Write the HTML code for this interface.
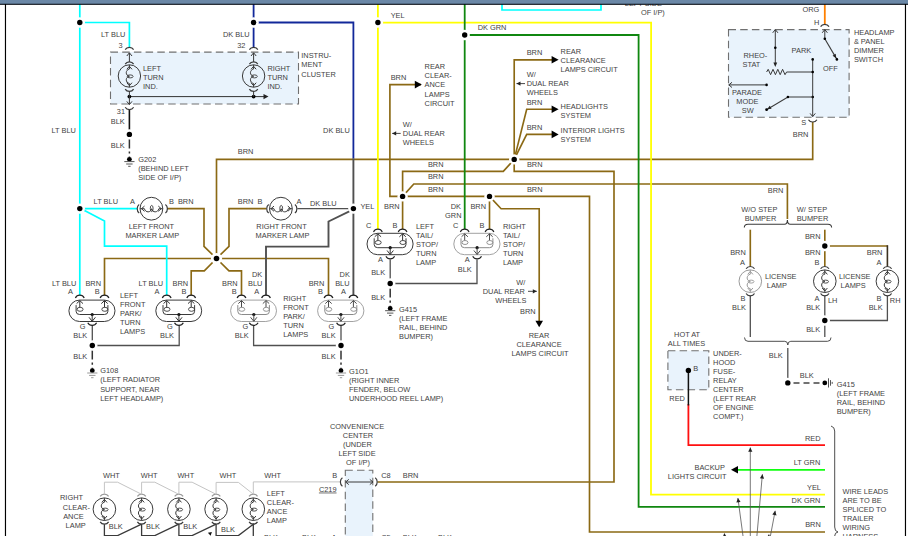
<!DOCTYPE html>
<html><head><meta charset="utf-8"><title>Exterior Lamps Wiring Diagram</title>
<style>
html,body{margin:0;padding:0;background:#fff;overflow:hidden}
svg{display:block}
text{font-family:"Liberation Sans",Arial,sans-serif;}
</style></head><body>
<svg width="908" height="536" viewBox="0 0 908 536">
<rect width="908" height="536" fill="#fff"/>
<rect x="110.5" y="52.1" width="188.0" height="51.9" fill="#e9f3fc" stroke="#707070" stroke-width="1.1" stroke-dasharray="7.5,4.2"/>
<rect x="728.5" y="29.6" width="120.6" height="87.6" fill="#e9f3fc" stroke="#707070" stroke-width="1.1" stroke-dasharray="7.5,4.2"/>
<rect x="667.9" y="350.7" width="40.9" height="39.0" fill="#e9f3fc" stroke="#707070" stroke-width="1.1" stroke-dasharray="7.5,4.2"/>
<rect x="345.3" y="470.2" width="27.5" height="74.8" fill="#e9f3fc" stroke="#707070" stroke-width="1.1" stroke-dasharray="7.5,4.2"/>
<path d="M216.5,258.5 L216.5,159.4 L812.7,159.4 L812.7,122.0" stroke="#8b6914" stroke-width="1.65" fill="none" />
<path d="M421.0,84.6 L389.9,84.6 L389.9,196.4 L589.5,196.4 L589.5,532.0 L825.0,532.0" stroke="#8b6914" stroke-width="1.65" fill="none" />
<path d="M556.0,59.8 L514.2,59.8 L514.2,159.4" stroke="#8b6914" stroke-width="1.65" fill="none" />
<path d="M514.2,159.4 L526.7,109.2 L556.0,109.2" stroke="#8b6914" stroke-width="1.65" fill="none" />
<path d="M514.2,159.4 L526.7,134.4 L556.0,134.4" stroke="#8b6914" stroke-width="1.65" fill="none" />
<path d="M402.6,196.4 L402.6,171.3 L503.3,171.3 L514.2,159.4" stroke="#8b6914" stroke-width="1.65" fill="none" />
<path d="M514.2,159.4 L514.2,171.3 L614.0,171.3 L614.0,482.0 L377.5,482.0" stroke="#8b6914" stroke-width="1.65" fill="none" />
<path d="M402.6,196.4 L413.8,184.0 L787.4,184.0 L787.4,219.0" stroke="#8b6914" stroke-width="1.65" fill="none" />
<path d="M402.6,196.4 L402.6,229.0" stroke="#8b6914" stroke-width="1.65" fill="none" />
<path d="M489.5,196.4 L489.5,229.0" stroke="#8b6914" stroke-width="1.65" fill="none" />
<path d="M489.5,196.4 L501.1,208.7 L539.2,208.7 L539.2,321.0" stroke="#8b6914" stroke-width="1.65" fill="none" />
<path d="M167.2,208.6 L204.0,208.6 L204.0,246.4 L216.5,258.5" stroke="#8b6914" stroke-width="1.65" fill="none" />
<path d="M266.0,208.6 L229.0,208.6 L229.0,246.4 L216.5,258.5" stroke="#8b6914" stroke-width="1.65" fill="none" />
<path d="M104.5,295.5 L104.5,258.5 L328.5,258.5 L328.5,295.5" stroke="#8b6914" stroke-width="1.65" fill="none" />
<path d="M216.5,258.5 L204.3,270.8 L191.2,270.8 L191.2,295.5" stroke="#8b6914" stroke-width="1.65" fill="none" />
<path d="M216.5,258.5 L229.0,270.8 L241.5,270.8 L241.5,295.5" stroke="#8b6914" stroke-width="1.65" fill="none" />
<path d="M750.3,229.7 L750.3,266.4" stroke="#8b6914" stroke-width="1.65" fill="none" />
<path d="M824.8,229.7 L824.8,266.4" stroke="#8b6914" stroke-width="1.65" fill="none" />
<path d="M824.8,246.0 L887.4,246.0" stroke="#8b6914" stroke-width="1.65" fill="none" />
<path d="M887.4,245.2 L887.4,266.4" stroke="#3a3020" stroke-width="1.6" fill="none" />
<path d="M253.6,4.0 L253.6,47.0" stroke="#12289a" stroke-width="1.8" fill="none" />
<path d="M253.6,22.5 L353.4,22.5 L353.4,158.5" stroke="#12289a" stroke-width="1.8" fill="none" />
<path d="M353.4,158.5 L353.4,295.5" stroke="#505050" stroke-width="1.9" fill="none" />
<path d="M353.4,209.3 L328.5,221.5 L328.5,246.6 L266.0,246.6 L266.0,295.5" stroke="#505050" stroke-width="1.9" fill="none" />
<path d="M79.8,4.0 L79.8,295.5" stroke="#00ffff" stroke-width="1.7" fill="none" />
<path d="M79.8,22.5 L129.4,22.5 L129.4,47.0" stroke="#00ffff" stroke-width="1.7" fill="none" />
<path d="M79.8,208.6 L137.4,208.6" stroke="#00ffff" stroke-width="1.7" fill="none" />
<path d="M79.8,208.6 L85.5,211.0 L104.5,221.0 L104.5,246.2 L166.7,246.2 L166.7,295.5" stroke="#00ffff" stroke-width="1.7" fill="none" />
<path d="M502.0,3.0 L502.0,10.0 L601.0,10.0 L601.0,3.0" stroke="#00ffff" stroke-width="1.7" fill="none" />
<path d="M377.9,4.0 L377.9,229.0" stroke="#ffff00" stroke-width="1.8" fill="none" />
<path d="M377.9,22.7 L651.1,22.7 L651.0,494.7 L825.0,494.7" stroke="#ffff00" stroke-width="1.8" fill="none" />
<path d="M464.7,4.0 L464.7,229.0" stroke="#108710" stroke-width="1.8" fill="none" />
<path d="M464.7,35.0 L638.6,35.0 L638.6,506.8 L825.0,506.8" stroke="#108710" stroke-width="1.8" fill="none" />
<path d="M824.8,4.0 L824.8,24.3" stroke="#ff8000" stroke-width="1.8" fill="none" />
<path d="M688.4,404.0 L688.4,445.1 L825.0,445.1" stroke="#ff1010" stroke-width="1.8" fill="none" />
<path d="M688.4,370.4 L688.4,405.5" stroke="#111" stroke-width="1.5" fill="none" />
<path d="M737.0,469.8 L825.0,469.8" stroke="#10ff10" stroke-width="1.8" fill="none" />
<path d="M129.4,96.6 L264.0,96.6" stroke="#333" stroke-width="1.0" fill="none" />
<polygon points="268.5,96.6 263.5,99.2 263.5,94.0" fill="#222"/>
<circle cx="129.4" cy="96.6" r="1.9" fill="#000"/>
<circle cx="253.6" cy="96.6" r="1.9" fill="#000"/>
<path d="M129.4,109.6 L129.4,134.4" stroke="#111" stroke-width="1.6" fill="none" />
<path d="M129.4,138.9 V157.3" stroke="#333" stroke-width="1.5" stroke-dasharray="9.5,3,2.2,3"/>
<path d="M92.3,325.2 L92.3,345.5" stroke="#505050" stroke-width="1.3" fill="none" />
<path d="M92.3,345.5 L179.2,345.5 L179.2,325.2" stroke="#505050" stroke-width="1.3" fill="none" />
<path d="M253.6,325.2 L253.6,345.5 L341.0,345.5" stroke="#505050" stroke-width="1.3" fill="none" />
<path d="M341.0,325.2 L341.0,345.5" stroke="#505050" stroke-width="1.3" fill="none" />
<path d="M92.3,350.0 V368.7" stroke="#333" stroke-width="1.5" stroke-dasharray="9.5,3,2.2,3"/>
<path d="M341.0,350.0 V368.7" stroke="#333" stroke-width="1.5" stroke-dasharray="9.5,3,2.2,3"/>
<path d="M390.2,259.5 L390.2,283.5" stroke="#505050" stroke-width="1.3" fill="none" />
<path d="M390.2,283.5 L477.0,283.5 L477.0,259.5" stroke="#505050" stroke-width="1.3" fill="none" />
<path d="M390.2,288.0 V306.4" stroke="#333" stroke-width="1.5" stroke-dasharray="9.5,3,2.2,3"/>
<path d="M750.3,295.8 L750.3,337.0" stroke="#505050" stroke-width="1.3" fill="none" />
<path d="M824.8,295.8 L824.8,337.0" stroke="#505050" stroke-width="1.3" fill="none" />
<path d="M887.4,295.8 L887.4,320.5 L824.8,320.5" stroke="#505050" stroke-width="1.3" fill="none" />
<path d="M787.8,348.0 L787.8,382.9" stroke="#505050" stroke-width="1.3" fill="none" />
<path d="M793.5,382.9 H821" stroke="#444" stroke-width="1.5" stroke-dasharray="6,4"/>
<path d="M744.3,227.5 Q744.3,224.2 748,224.2 H784.5 Q787.4,224.2 787.4,220 Q787.4,224.2 790.3,224.2 H828 Q831.6,224.2 831.6,227.5" fill="none" stroke="#3a3a3a" stroke-width="1.1"/>
<path d="M744.5,337.5 Q744.5,341.3 748,341.3 H784.8 Q787.8,341.3 787.8,345 Q787.8,341.3 790.8,341.3 H827.5 Q831,341.3 831,337.5" fill="none" stroke="#3a3a3a" stroke-width="0.9"/>
<path d="M831,426 Q834.7,427 834.7,431 V527 Q834.7,531.5 838,532 Q834.7,532.5 834.7,536" fill="none" stroke="#3a3a3a" stroke-width="0.9"/>
<path d="M125.2,49.6 Q126.5,47.3 129.4,47.3 Q132.3,47.3 133.6,49.6" stroke="#3a3a3a" stroke-width="1.2" fill="none"/>
<path d="M126.8,56.0 L129.4,52.8 L132.0,56.0" stroke="#3a3a3a" stroke-width="1" fill="none"/>
<path d="M129.4,53.0 L129.4,62.0" stroke="#3a3a3a" stroke-width="1" fill="none" />
<path d="M125.2,64.1 Q126.5,61.8 129.4,61.8 Q132.3,61.8 133.6,64.1" stroke="#3a3a3a" stroke-width="1.2" fill="none"/>
<circle cx="129.4" cy="76.0" r="11.2" fill="none" stroke="#3a3a3a" stroke-width="1"/>
<path d="M129.4,64.8 V69.0 C125.2,70.0 125.2,75.5 129.4,76.3 C125.2,77.0 125.2,82.5 129.4,83.5 V87.2" fill="none" stroke="#3a3a3a" stroke-width="1"/>
<ellipse cx="130.2" cy="76.4" rx="2.9" ry="1.5" fill="none" stroke="#3a3a3a" stroke-width="0.9"/>
<path d="M126.8,69.3 L129.4,66.3 L132.0,69.3" stroke="#3a3a3a" stroke-width="1" fill="none"/>
<path d="M126.8,82.7 L129.4,85.7 L132.0,82.7" stroke="#3a3a3a" stroke-width="1" fill="none"/>
<path d="M125.2,89.1 Q126.5,91.4 129.4,91.4 Q132.3,91.4 133.6,89.1" stroke="#3a3a3a" stroke-width="1.2" fill="none"/>
<path d="M129.4,91.4 L129.4,96.6" stroke="#3a3a3a" stroke-width="1" fill="none" />
<path d="M249.4,49.6 Q250.7,47.3 253.6,47.3 Q256.5,47.3 257.8,49.6" stroke="#3a3a3a" stroke-width="1.2" fill="none"/>
<path d="M251.0,56.0 L253.6,52.8 L256.2,56.0" stroke="#3a3a3a" stroke-width="1" fill="none"/>
<path d="M253.6,53.0 L253.6,62.0" stroke="#3a3a3a" stroke-width="1" fill="none" />
<path d="M249.4,64.1 Q250.7,61.8 253.6,61.8 Q256.5,61.8 257.8,64.1" stroke="#3a3a3a" stroke-width="1.2" fill="none"/>
<circle cx="253.6" cy="76.0" r="11.2" fill="none" stroke="#3a3a3a" stroke-width="1"/>
<path d="M253.6,64.8 V69.0 C249.4,70.0 249.4,75.5 253.6,76.3 C249.4,77.0 249.4,82.5 253.6,83.5 V87.2" fill="none" stroke="#3a3a3a" stroke-width="1"/>
<ellipse cx="254.4" cy="76.4" rx="2.9" ry="1.5" fill="none" stroke="#3a3a3a" stroke-width="0.9"/>
<path d="M251.0,69.3 L253.6,66.3 L256.2,69.3" stroke="#3a3a3a" stroke-width="1" fill="none"/>
<path d="M251.0,82.7 L253.6,85.7 L256.2,82.7" stroke="#3a3a3a" stroke-width="1" fill="none"/>
<path d="M249.4,89.1 Q250.7,91.4 253.6,91.4 Q256.5,91.4 257.8,89.1" stroke="#3a3a3a" stroke-width="1.2" fill="none"/>
<path d="M253.6,91.4 L253.6,96.6" stroke="#3a3a3a" stroke-width="1" fill="none" />
<path d="M129.4,96.6 L129.4,104.4" stroke="#3a3a3a" stroke-width="1" fill="none" />
<path d="M126.8,101.4 L129.4,104.6 L132.0,101.4" stroke="#3a3a3a" stroke-width="1" fill="none"/>
<path d="M125.2,107.3 Q126.5,109.6 129.4,109.6 Q132.3,109.6 133.6,107.3" stroke="#3a3a3a" stroke-width="1.2" fill="none"/>
<circle cx="129.4" cy="159.3" r="2.4" fill="#000"/>
<path d="M124.3,161.6 H134.5" stroke="#555" stroke-width="1"/>
<path d="M126.2,164.0 H132.6" stroke="#555" stroke-width="1"/>
<path d="M128.2,166.3 H130.6" stroke="#555" stroke-width="1"/>
<circle cx="151.4" cy="208.7" r="11.4" fill="none" stroke="#3a3a3a" stroke-width="1"/>
<path d="M140.0,208.7 H144.4 C145.4,212.9 150.9,212.9 151.7,208.7 C152.4,212.9 157.9,212.9 158.9,208.7 H162.8" fill="none" stroke="#3a3a3a" stroke-width="1"/>
<ellipse cx="151.7" cy="208.5" rx="1.4" ry="3.1" fill="none" stroke="#3a3a3a" stroke-width="0.9"/>
<path d="M144.5,206.1 L141.5,208.7 L144.5,211.3" stroke="#3a3a3a" stroke-width="1" fill="none"/>
<path d="M158.3,206.1 L161.3,208.7 L158.3,211.3" stroke="#3a3a3a" stroke-width="1" fill="none"/>
<path d="M139.2,204.5 Q137.2,205.8 137.2,208.7 Q137.2,211.6 139.2,212.9" stroke="#3a3a3a" stroke-width="1.2" fill="none"/>
<path d="M165.4,204.5 Q167.4,205.8 167.4,208.7 Q167.4,211.6 165.4,212.9" stroke="#3a3a3a" stroke-width="1.2" fill="none"/>
<circle cx="280.9" cy="208.7" r="11.4" fill="none" stroke="#3a3a3a" stroke-width="1"/>
<path d="M269.5,208.7 H273.9 C274.9,212.9 280.4,212.9 281.2,208.7 C281.9,212.9 287.4,212.9 288.4,208.7 H292.3" fill="none" stroke="#3a3a3a" stroke-width="1"/>
<ellipse cx="281.2" cy="208.5" rx="1.4" ry="3.1" fill="none" stroke="#3a3a3a" stroke-width="0.9"/>
<path d="M274.0,206.1 L271.0,208.7 L274.0,211.3" stroke="#3a3a3a" stroke-width="1" fill="none"/>
<path d="M287.8,206.1 L290.8,208.7 L287.8,211.3" stroke="#3a3a3a" stroke-width="1" fill="none"/>
<path d="M268.7,204.5 Q266.7,205.8 266.7,208.7 Q266.7,211.6 268.7,212.9" stroke="#3a3a3a" stroke-width="1.2" fill="none"/>
<path d="M294.9,204.5 Q296.9,205.8 296.9,208.7 Q296.9,211.6 294.9,212.9" stroke="#3a3a3a" stroke-width="1.2" fill="none"/>
<path d="M297.3,208.6 L353.4,208.6" stroke="#505050" stroke-width="1.3" fill="none" />
<rect x="68.9" y="300.1" width="46.1" height="21.4" rx="10.7" fill="none" stroke="#3a3a3a" stroke-width="1"/>
<path d="M75.4,298.0 Q76.7,295.2 79.8,295.2 Q82.9,295.2 84.2,298.0" stroke="#222" stroke-width="1.25" fill="none"/>
<path d="M76.6,303.6 L79.8,300.6 L83.0,303.6" stroke="#333" stroke-width="1" fill="none"/>
<path d="M79.8,300.6 V307.3" stroke="#333" stroke-width="1"/>
<ellipse cx="80.1" cy="309.3" rx="3" ry="2" fill="none" stroke="#3a3a3a" stroke-width="0.9"/>
<path d="M100.1,298.0 Q101.4,295.2 104.5,295.2 Q107.6,295.2 108.9,298.0" stroke="#222" stroke-width="1.25" fill="none"/>
<path d="M101.3,303.6 L104.5,300.6 L107.7,303.6" stroke="#333" stroke-width="1" fill="none"/>
<path d="M104.5,300.6 V307.3" stroke="#333" stroke-width="1"/>
<ellipse cx="104.8" cy="309.3" rx="3" ry="2" fill="none" stroke="#3a3a3a" stroke-width="0.9"/>
<path d="M76.1,305.1 V311.3 Q76.1,314.5 79.6,314.5 H104.5 Q107.9,314.5 107.9,311.3 V305.1" fill="none" stroke="#3a3a3a" stroke-width="1"/>
<circle cx="92.2" cy="314.5" r="1.6" fill="#111"/>
<path d="M92.2,314.5 V321.2" stroke="#333" stroke-width="1"/>
<path d="M89.0,317.3 L92.2,321.3 L95.4,317.3" stroke="#333" stroke-width="1" fill="none"/>
<path d="M87.8,322.8 Q89.1,325.4 92.2,325.4 Q95.2,325.4 96.6,322.8" stroke="#222" stroke-width="1.25" fill="none"/>
<rect x="155.8" y="300.1" width="45.9" height="21.4" rx="10.7" fill="none" stroke="#3a3a3a" stroke-width="1"/>
<path d="M162.3,298.0 Q163.6,295.2 166.7,295.2 Q169.8,295.2 171.1,298.0" stroke="#222" stroke-width="1.25" fill="none"/>
<path d="M163.5,303.6 L166.7,300.6 L169.9,303.6" stroke="#333" stroke-width="1" fill="none"/>
<path d="M166.7,300.6 V307.3" stroke="#333" stroke-width="1"/>
<ellipse cx="167.0" cy="309.3" rx="3" ry="2" fill="none" stroke="#3a3a3a" stroke-width="0.9"/>
<path d="M186.8,298.0 Q188.1,295.2 191.2,295.2 Q194.3,295.2 195.6,298.0" stroke="#222" stroke-width="1.25" fill="none"/>
<path d="M188.0,303.6 L191.2,300.6 L194.4,303.6" stroke="#333" stroke-width="1" fill="none"/>
<path d="M191.2,300.6 V307.3" stroke="#333" stroke-width="1"/>
<ellipse cx="191.5" cy="309.3" rx="3" ry="2" fill="none" stroke="#3a3a3a" stroke-width="0.9"/>
<path d="M163.0,305.1 V311.3 Q163.0,314.5 166.5,314.5 H191.2 Q194.6,314.5 194.6,311.3 V305.1" fill="none" stroke="#3a3a3a" stroke-width="1"/>
<circle cx="178.9" cy="314.5" r="1.6" fill="#111"/>
<path d="M178.9,314.5 V321.2" stroke="#333" stroke-width="1"/>
<path d="M175.8,317.3 L178.9,321.3 L182.1,317.3" stroke="#333" stroke-width="1" fill="none"/>
<path d="M174.5,322.8 Q175.9,325.4 178.9,325.4 Q182.0,325.4 183.3,322.8" stroke="#222" stroke-width="1.25" fill="none"/>
<rect x="230.6" y="300.1" width="45.9" height="21.4" rx="10.7" fill="none" stroke="#a2a2a2" stroke-width="1"/>
<path d="M237.1,298.0 Q238.4,295.2 241.5,295.2 Q244.6,295.2 245.9,298.0" stroke="#222" stroke-width="1.25" fill="none"/>
<path d="M238.3,303.6 L241.5,300.6 L244.7,303.6" stroke="#4a4a4a" stroke-width="1" fill="none"/>
<path d="M241.5,300.6 V307.3" stroke="#4a4a4a" stroke-width="1"/>
<ellipse cx="241.8" cy="309.3" rx="3" ry="2" fill="none" stroke="#8a8a8a" stroke-width="0.9"/>
<path d="M261.6,298.0 Q262.9,295.2 266.0,295.2 Q269.1,295.2 270.4,298.0" stroke="#222" stroke-width="1.25" fill="none"/>
<path d="M262.8,303.6 L266.0,300.6 L269.2,303.6" stroke="#4a4a4a" stroke-width="1" fill="none"/>
<path d="M266.0,300.6 V307.3" stroke="#4a4a4a" stroke-width="1"/>
<ellipse cx="266.3" cy="309.3" rx="3" ry="2" fill="none" stroke="#8a8a8a" stroke-width="0.9"/>
<path d="M237.8,305.1 V311.3 Q237.8,314.5 241.3,314.5 H266.0 Q269.4,314.5 269.4,311.3 V305.1" fill="none" stroke="#8a8a8a" stroke-width="1"/>
<circle cx="253.8" cy="314.5" r="1.6" fill="#111"/>
<path d="M253.8,314.5 V321.2" stroke="#4a4a4a" stroke-width="1"/>
<path d="M250.6,317.3 L253.8,321.3 L256.9,317.3" stroke="#4a4a4a" stroke-width="1" fill="none"/>
<path d="M249.3,322.8 Q250.7,325.4 253.8,325.4 Q256.8,325.4 258.1,322.8" stroke="#222" stroke-width="1.25" fill="none"/>
<rect x="317.6" y="300.1" width="46.3" height="21.4" rx="10.7" fill="none" stroke="#a2a2a2" stroke-width="1"/>
<path d="M324.1,298.0 Q325.4,295.2 328.5,295.2 Q331.6,295.2 332.9,298.0" stroke="#222" stroke-width="1.25" fill="none"/>
<path d="M325.3,303.6 L328.5,300.6 L331.7,303.6" stroke="#4a4a4a" stroke-width="1" fill="none"/>
<path d="M328.5,300.6 V307.3" stroke="#4a4a4a" stroke-width="1"/>
<ellipse cx="328.8" cy="309.3" rx="3" ry="2" fill="none" stroke="#8a8a8a" stroke-width="0.9"/>
<path d="M349.0,298.0 Q350.3,295.2 353.4,295.2 Q356.5,295.2 357.8,298.0" stroke="#222" stroke-width="1.25" fill="none"/>
<path d="M350.2,303.6 L353.4,300.6 L356.6,303.6" stroke="#4a4a4a" stroke-width="1" fill="none"/>
<path d="M353.4,300.6 V307.3" stroke="#4a4a4a" stroke-width="1"/>
<ellipse cx="353.7" cy="309.3" rx="3" ry="2" fill="none" stroke="#8a8a8a" stroke-width="0.9"/>
<path d="M324.8,305.1 V311.3 Q324.8,314.5 328.3,314.5 H353.4 Q356.8,314.5 356.8,311.3 V305.1" fill="none" stroke="#8a8a8a" stroke-width="1"/>
<circle cx="340.9" cy="314.5" r="1.6" fill="#111"/>
<path d="M340.9,314.5 V321.2" stroke="#4a4a4a" stroke-width="1"/>
<path d="M337.8,317.3 L340.9,321.3 L344.1,317.3" stroke="#4a4a4a" stroke-width="1" fill="none"/>
<path d="M336.6,322.8 Q337.9,325.4 340.9,325.4 Q344.0,325.4 345.3,322.8" stroke="#222" stroke-width="1.25" fill="none"/>
<circle cx="92.3" cy="370.7" r="2.4" fill="#000"/>
<path d="M87.2,373.0 H97.4" stroke="#999" stroke-width="1"/>
<path d="M89.1,375.4 H95.5" stroke="#999" stroke-width="1"/>
<path d="M91.1,377.7 H93.5" stroke="#999" stroke-width="1"/>
<circle cx="341.0" cy="370.7" r="2.4" fill="#000"/>
<path d="M335.9,373.0 H346.1" stroke="#999" stroke-width="1"/>
<path d="M337.8,375.4 H344.2" stroke="#999" stroke-width="1"/>
<path d="M339.8,377.7 H342.2" stroke="#999" stroke-width="1"/>
<rect x="367.0" y="233.3" width="46.1" height="21.4" rx="10.7" fill="none" stroke="#3a3a3a" stroke-width="1"/>
<path d="M373.5,231.9 Q374.8,229.1 377.9,229.1 Q381.0,229.1 382.3,231.9" stroke="#222" stroke-width="1.1" fill="none"/>
<path d="M374.7,236.8 L377.9,233.8 L381.1,236.8" stroke="#333" stroke-width="1" fill="none"/>
<path d="M377.9,233.8 V240.5" stroke="#333" stroke-width="1"/>
<ellipse cx="378.2" cy="242.5" rx="3" ry="2" fill="none" stroke="#3a3a3a" stroke-width="0.9"/>
<path d="M398.2,231.9 Q399.5,229.1 402.6,229.1 Q405.7,229.1 407.0,231.9" stroke="#222" stroke-width="1.1" fill="none"/>
<path d="M399.4,236.8 L402.6,233.8 L405.8,236.8" stroke="#333" stroke-width="1" fill="none"/>
<path d="M402.6,233.8 V240.5" stroke="#333" stroke-width="1"/>
<ellipse cx="402.9" cy="242.5" rx="3" ry="2" fill="none" stroke="#3a3a3a" stroke-width="0.9"/>
<path d="M374.2,238.3 V244.5 Q374.2,247.7 377.7,247.7 H402.6 Q406.0,247.7 406.0,244.5 V238.3" fill="none" stroke="#3a3a3a" stroke-width="1"/>
<circle cx="390.2" cy="247.7" r="1.6" fill="#111"/>
<path d="M390.2,247.7 V254.4" stroke="#333" stroke-width="1"/>
<path d="M387.1,250.5 L390.2,254.5 L393.4,250.5" stroke="#333" stroke-width="1" fill="none"/>
<path d="M385.9,256.3 Q387.2,258.9 390.2,258.9 Q393.3,258.9 394.6,256.3" stroke="#222" stroke-width="1.1" fill="none"/>
<rect x="453.8" y="233.3" width="46.2" height="21.4" rx="10.7" fill="none" stroke="#a2a2a2" stroke-width="1"/>
<path d="M460.3,231.9 Q461.6,229.1 464.7,229.1 Q467.8,229.1 469.1,231.9" stroke="#222" stroke-width="1.1" fill="none"/>
<path d="M461.5,236.8 L464.7,233.8 L467.9,236.8" stroke="#4a4a4a" stroke-width="1" fill="none"/>
<path d="M464.7,233.8 V240.5" stroke="#4a4a4a" stroke-width="1"/>
<ellipse cx="465.0" cy="242.5" rx="3" ry="2" fill="none" stroke="#8a8a8a" stroke-width="0.9"/>
<path d="M485.1,231.9 Q486.4,229.1 489.5,229.1 Q492.6,229.1 493.9,231.9" stroke="#222" stroke-width="1.1" fill="none"/>
<path d="M486.3,236.8 L489.5,233.8 L492.7,236.8" stroke="#4a4a4a" stroke-width="1" fill="none"/>
<path d="M489.5,233.8 V240.5" stroke="#4a4a4a" stroke-width="1"/>
<ellipse cx="489.8" cy="242.5" rx="3" ry="2" fill="none" stroke="#8a8a8a" stroke-width="0.9"/>
<path d="M461.0,238.3 V244.5 Q461.0,247.7 464.5,247.7 H489.5 Q492.9,247.7 492.9,244.5 V238.3" fill="none" stroke="#8a8a8a" stroke-width="1"/>
<circle cx="477.1" cy="247.7" r="1.6" fill="#111"/>
<path d="M477.1,247.7 V254.4" stroke="#4a4a4a" stroke-width="1"/>
<path d="M473.9,250.5 L477.1,254.5 L480.3,250.5" stroke="#4a4a4a" stroke-width="1" fill="none"/>
<path d="M472.7,256.3 Q474.0,258.9 477.1,258.9 Q480.2,258.9 481.5,256.3" stroke="#222" stroke-width="1.1" fill="none"/>
<circle cx="390.2" cy="308.4" r="2.4" fill="#000"/>
<path d="M385.1,310.7 H395.3" stroke="#555" stroke-width="1"/>
<path d="M387.0,313.1 H393.4" stroke="#555" stroke-width="1"/>
<path d="M389.0,315.4 H391.4" stroke="#555" stroke-width="1"/>
<path d="M746.1,268.8 Q747.4,266.5 750.3,266.5 Q753.2,266.5 754.5,268.8" stroke="#3a3a3a" stroke-width="1.2" fill="none"/>
<circle cx="750.3" cy="281.2" r="11.3" fill="none" stroke="#9a9a9a" stroke-width="1"/>
<path d="M750.3,269.9 V274.2 C746.1,275.2 746.1,280.7 750.3,281.5 C746.1,282.2 746.1,287.7 750.3,288.7 V292.5" fill="none" stroke="#9a9a9a" stroke-width="1"/>
<ellipse cx="751.1" cy="281.6" rx="2.9" ry="1.5" fill="none" stroke="#9a9a9a" stroke-width="0.9"/>
<path d="M747.7,274.4 L750.3,271.4 L752.9,274.4" stroke="#9a9a9a" stroke-width="1" fill="none"/>
<path d="M747.7,288.0 L750.3,291.0 L752.9,288.0" stroke="#9a9a9a" stroke-width="1" fill="none"/>
<path d="M746.1,293.5 Q747.4,295.8 750.3,295.8 Q753.2,295.8 754.5,293.5" stroke="#3a3a3a" stroke-width="1.2" fill="none"/>
<path d="M820.6,268.8 Q821.9,266.5 824.8,266.5 Q827.7,266.5 829.0,268.8" stroke="#3a3a3a" stroke-width="1.2" fill="none"/>
<circle cx="824.8" cy="281.2" r="11.3" fill="none" stroke="#3a3a3a" stroke-width="1"/>
<path d="M824.8,269.9 V274.2 C820.6,275.2 820.6,280.7 824.8,281.5 C820.6,282.2 820.6,287.7 824.8,288.7 V292.5" fill="none" stroke="#3a3a3a" stroke-width="1"/>
<ellipse cx="825.6" cy="281.6" rx="2.9" ry="1.5" fill="none" stroke="#3a3a3a" stroke-width="0.9"/>
<path d="M822.2,274.4 L824.8,271.4 L827.4,274.4" stroke="#3a3a3a" stroke-width="1" fill="none"/>
<path d="M822.2,288.0 L824.8,291.0 L827.4,288.0" stroke="#3a3a3a" stroke-width="1" fill="none"/>
<path d="M820.6,293.5 Q821.9,295.8 824.8,295.8 Q827.7,295.8 829.0,293.5" stroke="#3a3a3a" stroke-width="1.2" fill="none"/>
<path d="M883.2,268.8 Q884.5,266.5 887.4,266.5 Q890.3,266.5 891.6,268.8" stroke="#3a3a3a" stroke-width="1.2" fill="none"/>
<circle cx="887.4" cy="281.2" r="11.3" fill="none" stroke="#3a3a3a" stroke-width="1"/>
<path d="M887.4,269.9 V274.2 C883.2,275.2 883.2,280.7 887.4,281.5 C883.2,282.2 883.2,287.7 887.4,288.7 V292.5" fill="none" stroke="#3a3a3a" stroke-width="1"/>
<ellipse cx="888.2" cy="281.6" rx="2.9" ry="1.5" fill="none" stroke="#3a3a3a" stroke-width="0.9"/>
<path d="M884.8,274.4 L887.4,271.4 L890.0,274.4" stroke="#3a3a3a" stroke-width="1" fill="none"/>
<path d="M884.8,288.0 L887.4,291.0 L890.0,288.0" stroke="#3a3a3a" stroke-width="1" fill="none"/>
<path d="M883.2,293.5 Q884.5,295.8 887.4,295.8 Q890.3,295.8 891.6,293.5" stroke="#3a3a3a" stroke-width="1.2" fill="none"/>
<circle cx="824.8" cy="382.9" r="2.4" fill="#000"/>
<path d="M828.5,378.3 V387.5" stroke="#555" stroke-width="1"/>
<path d="M830.5,380.1 V385.7" stroke="#555" stroke-width="1"/>
<path d="M832.2,381.9 V383.9" stroke="#555" stroke-width="1"/>
<path d="M100.2,496.4 Q101.5,494.1 104.4,494.1 Q107.3,494.1 108.6,496.4" stroke="#999" stroke-width="1.2" fill="none"/>
<circle cx="104.4" cy="509.2" r="11.3" fill="none" stroke="#3a3a3a" stroke-width="1"/>
<path d="M104.4,497.9 V502.2 C100.2,503.2 100.2,508.7 104.4,509.5 C100.2,510.2 100.2,515.7 104.4,516.7 V520.5" fill="none" stroke="#3a3a3a" stroke-width="1"/>
<ellipse cx="105.2" cy="509.6" rx="2.9" ry="1.5" fill="none" stroke="#3a3a3a" stroke-width="0.9"/>
<path d="M101.8,502.4 L104.4,499.4 L107.0,502.4" stroke="#3a3a3a" stroke-width="1" fill="none"/>
<path d="M101.8,516.0 L104.4,519.0 L107.0,516.0" stroke="#3a3a3a" stroke-width="1" fill="none"/>
<path d="M100.2,521.9 Q101.5,524.2 104.4,524.2 Q107.3,524.2 108.6,521.9" stroke="#3a3a3a" stroke-width="1.2" fill="none"/>
<path d="M137.4,496.4 Q138.7,494.1 141.6,494.1 Q144.5,494.1 145.8,496.4" stroke="#999" stroke-width="1.2" fill="none"/>
<circle cx="141.6" cy="509.2" r="11.3" fill="none" stroke="#3a3a3a" stroke-width="1"/>
<path d="M141.6,497.9 V502.2 C137.4,503.2 137.4,508.7 141.6,509.5 C137.4,510.2 137.4,515.7 141.6,516.7 V520.5" fill="none" stroke="#3a3a3a" stroke-width="1"/>
<ellipse cx="142.4" cy="509.6" rx="2.9" ry="1.5" fill="none" stroke="#3a3a3a" stroke-width="0.9"/>
<path d="M139.0,502.4 L141.6,499.4 L144.2,502.4" stroke="#3a3a3a" stroke-width="1" fill="none"/>
<path d="M139.0,516.0 L141.6,519.0 L144.2,516.0" stroke="#3a3a3a" stroke-width="1" fill="none"/>
<path d="M137.4,521.9 Q138.7,524.2 141.6,524.2 Q144.5,524.2 145.8,521.9" stroke="#3a3a3a" stroke-width="1.2" fill="none"/>
<path d="M174.7,496.4 Q176.0,494.1 178.9,494.1 Q181.8,494.1 183.1,496.4" stroke="#999" stroke-width="1.2" fill="none"/>
<circle cx="178.9" cy="509.2" r="11.3" fill="none" stroke="#3a3a3a" stroke-width="1"/>
<path d="M178.9,497.9 V502.2 C174.7,503.2 174.7,508.7 178.9,509.5 C174.7,510.2 174.7,515.7 178.9,516.7 V520.5" fill="none" stroke="#3a3a3a" stroke-width="1"/>
<ellipse cx="179.7" cy="509.6" rx="2.9" ry="1.5" fill="none" stroke="#3a3a3a" stroke-width="0.9"/>
<path d="M176.3,502.4 L178.9,499.4 L181.5,502.4" stroke="#3a3a3a" stroke-width="1" fill="none"/>
<path d="M176.3,516.0 L178.9,519.0 L181.5,516.0" stroke="#3a3a3a" stroke-width="1" fill="none"/>
<path d="M174.7,521.9 Q176.0,524.2 178.9,524.2 Q181.8,524.2 183.1,521.9" stroke="#3a3a3a" stroke-width="1.2" fill="none"/>
<path d="M211.9,496.4 Q213.2,494.1 216.1,494.1 Q219.0,494.1 220.3,496.4" stroke="#999" stroke-width="1.2" fill="none"/>
<circle cx="216.1" cy="509.2" r="11.3" fill="none" stroke="#3a3a3a" stroke-width="1"/>
<path d="M216.1,497.9 V502.2 C211.9,503.2 211.9,508.7 216.1,509.5 C211.9,510.2 211.9,515.7 216.1,516.7 V520.5" fill="none" stroke="#3a3a3a" stroke-width="1"/>
<ellipse cx="216.9" cy="509.6" rx="2.9" ry="1.5" fill="none" stroke="#3a3a3a" stroke-width="0.9"/>
<path d="M213.5,502.4 L216.1,499.4 L218.7,502.4" stroke="#3a3a3a" stroke-width="1" fill="none"/>
<path d="M213.5,516.0 L216.1,519.0 L218.7,516.0" stroke="#3a3a3a" stroke-width="1" fill="none"/>
<path d="M211.9,521.9 Q213.2,524.2 216.1,524.2 Q219.0,524.2 220.3,521.9" stroke="#3a3a3a" stroke-width="1.2" fill="none"/>
<path d="M249.1,496.4 Q250.4,494.1 253.3,494.1 Q256.2,494.1 257.5,496.4" stroke="#999" stroke-width="1.2" fill="none"/>
<circle cx="253.3" cy="509.2" r="11.3" fill="none" stroke="#3a3a3a" stroke-width="1"/>
<path d="M253.3,497.9 V502.2 C249.1,503.2 249.1,508.7 253.3,509.5 C249.1,510.2 249.1,515.7 253.3,516.7 V520.5" fill="none" stroke="#3a3a3a" stroke-width="1"/>
<ellipse cx="254.1" cy="509.6" rx="2.9" ry="1.5" fill="none" stroke="#3a3a3a" stroke-width="0.9"/>
<path d="M250.7,502.4 L253.3,499.4 L255.9,502.4" stroke="#3a3a3a" stroke-width="1" fill="none"/>
<path d="M250.7,516.0 L253.3,519.0 L255.9,516.0" stroke="#3a3a3a" stroke-width="1" fill="none"/>
<path d="M249.1,521.9 Q250.4,524.2 253.3,524.2 Q256.2,524.2 257.5,521.9" stroke="#3a3a3a" stroke-width="1.2" fill="none"/>
<path d="M104.4,494.0 L104.4,482.2 L117.6,482.2 L141.4,494.2" stroke="#c4c4c4" stroke-width="1" fill="none" />
<path d="M141.6,494.0 L141.6,482.2 L154.8,482.2 L178.6,494.2" stroke="#c4c4c4" stroke-width="1" fill="none" />
<path d="M178.9,494.0 L178.9,482.2 L192.1,482.2 L215.9,494.2" stroke="#c4c4c4" stroke-width="1" fill="none" />
<path d="M216.1,494.0 L216.1,482.4 L238.4,482.4 L253.1,494.0" stroke="#c4c4c4" stroke-width="1" fill="none" />
<path d="M253.3,494.0 L253.3,481.9 L340.6,481.9" stroke="#c4c4c4" stroke-width="1" fill="none" />
<path d="M104.4,524.2 L104.4,535.6 L117.6,535.6 L141.6,524.2" stroke="#3a3a3a" stroke-width="1.3" fill="none" />
<path d="M141.6,524.2 L141.6,535.6 L154.8,535.6 L178.8,524.2" stroke="#3a3a3a" stroke-width="1.3" fill="none" />
<path d="M178.9,524.2 L178.9,535.6 L192.1,535.6 L216.1,524.2" stroke="#3a3a3a" stroke-width="1.3" fill="none" />
<path d="M216.1,524.2 L216.1,535.6 L238.4,535.6 L253.3,524.2 L253.3,537.0" stroke="#3a3a3a" stroke-width="1.3" fill="none" />
<polygon points="210.6,535.8 207.9,532.7 211.9,531.9" fill="#111"/>
<circle cx="79.8" cy="22.5" r="5.2" fill="#fff"/>
<circle cx="79.8" cy="22.5" r="2.7" fill="#000"/>
<circle cx="253.6" cy="22.5" r="5.2" fill="#fff"/>
<circle cx="253.6" cy="22.5" r="2.7" fill="#000"/>
<circle cx="377.9" cy="22.5" r="5.2" fill="#fff"/>
<circle cx="377.9" cy="22.5" r="2.7" fill="#000"/>
<circle cx="464.7" cy="35.0" r="5.2" fill="#fff"/>
<circle cx="464.7" cy="35.0" r="2.7" fill="#000"/>
<circle cx="79.8" cy="208.6" r="5.2" fill="#fff"/>
<circle cx="79.8" cy="208.6" r="2.7" fill="#000"/>
<circle cx="353.4" cy="208.6" r="5.2" fill="#fff"/>
<circle cx="353.4" cy="208.6" r="2.7" fill="#000"/>
<circle cx="514.2" cy="159.4" r="5.2" fill="#fff"/>
<circle cx="514.2" cy="159.4" r="2.7" fill="#000"/>
<circle cx="402.6" cy="196.4" r="5.2" fill="#fff"/>
<circle cx="402.6" cy="196.4" r="2.7" fill="#000"/>
<circle cx="489.5" cy="196.4" r="5.2" fill="#fff"/>
<circle cx="489.5" cy="196.4" r="2.7" fill="#000"/>
<circle cx="129.4" cy="134.4" r="5.2" fill="#fff"/>
<circle cx="129.4" cy="134.4" r="2.7" fill="#000"/>
<circle cx="92.3" cy="345.5" r="5.2" fill="#fff"/>
<circle cx="92.3" cy="345.5" r="2.7" fill="#000"/>
<circle cx="341.0" cy="345.5" r="5.2" fill="#fff"/>
<circle cx="341.0" cy="345.5" r="2.7" fill="#000"/>
<circle cx="390.2" cy="283.5" r="5.2" fill="#fff"/>
<circle cx="390.2" cy="283.5" r="2.7" fill="#000"/>
<circle cx="824.8" cy="246.0" r="5.2" fill="#fff"/>
<circle cx="824.8" cy="246.0" r="2.7" fill="#000"/>
<circle cx="824.8" cy="320.5" r="5.2" fill="#fff"/>
<circle cx="824.8" cy="320.5" r="2.7" fill="#000"/>
<circle cx="787.8" cy="382.9" r="5.2" fill="#fff"/>
<circle cx="787.8" cy="382.9" r="2.7" fill="#000"/>
<circle cx="688.4" cy="370.4" r="2.7" fill="#000"/>
<circle cx="216.5" cy="258.5" r="5.6" fill="#fff"/>
<circle cx="216.5" cy="258.5" r="2.8" fill="#000"/>
<polygon points="421.8,84.6 414.8,88.4 414.8,80.8" fill="#000"/>
<polygon points="558.6,59.8 551.6,63.6 551.6,56.0" fill="#000"/>
<polygon points="558.6,109.2 551.6,113.0 551.6,105.4" fill="#000"/>
<polygon points="558.6,134.4 551.6,138.2 551.6,130.6" fill="#000"/>
<polygon points="539.2,327.2 535.4,320.7 543.0,320.7" fill="#000"/>
<polygon points="731.0,469.8 738.0,466.0 738.0,473.6" fill="#000"/>
<path d="M400.7,133.4 L392.2,133.4" stroke="#333" stroke-width="0.9" fill="none" />
<polygon points="392.2,133.4 396.2,131.3 396.2,135.5" fill="#222"/>
<path d="M525.0,83.6 L516.5,83.6" stroke="#333" stroke-width="0.9" fill="none" />
<polygon points="516.5,83.6 520.5,81.5 520.5,85.7" fill="#222"/>
<path d="M528.0,291.3 L536.8,291.3" stroke="#333" stroke-width="0.9" fill="none" />
<polygon points="536.8,291.3 532.8,293.4 532.8,289.2" fill="#222"/>
<path d="M750.3,447.5 L750.3,536.0" stroke="#555" stroke-width="0.8" fill="none" />
<polygon points="750.3,447.5 752.4,451.8 748.2,451.8" fill="#222"/>
<path d="M762.4,474.2 L756.9,536.0" stroke="#555" stroke-width="0.8" fill="none" />
<polygon points="762.4,474.2 764.1,478.7 759.9,478.3" fill="#222"/>
<path d="M737.9,498.0 L743.0,536.0" stroke="#555" stroke-width="0.8" fill="none" />
<polygon points="737.9,498.0 740.6,502.0 736.4,502.5" fill="#222"/>
<path d="M775.2,510.8 L770.4,536.0" stroke="#555" stroke-width="0.8" fill="none" />
<polygon points="775.2,510.8 776.5,515.4 772.3,514.6" fill="#222"/>
<polygon points="724.3,533.0 726.8,537.1 722.6,537.5" fill="#222"/>
<polygon points="769.0,534.0 770.7,538.5 766.5,538.1" fill="#222"/>
<path d="M820.6,26.6 Q821.9,24.3 824.8,24.3 Q827.7,24.3 829.0,26.6" stroke="#3a3a3a" stroke-width="1.2" fill="none"/>
<path d="M822.2,32.8 L824.8,29.6 L827.4,32.8" stroke="#3a3a3a" stroke-width="1" fill="none"/>
<path d="M824.8,29.6 L824.8,38.8" stroke="#3a3a3a" stroke-width="1" fill="none" />
<path d="M824.8,38.8 L836.9,59.4" stroke="#3a3a3a" stroke-width="1.1" fill="none" />
<circle cx="824.8" cy="38.8" r="1.3" fill="#000"/>
<circle cx="836.9" cy="59.4" r="1.3" fill="#000"/>
<polygon points="836.2,58.2 832.6,55.7 835.7,53.8" fill="#222"/>
<path d="M772.7,32.8 L775.3,29.6 L777.9,32.8" stroke="#3a3a3a" stroke-width="1" fill="none"/>
<path d="M775.3,29.6 L775.3,64.0" stroke="#3a3a3a" stroke-width="1" fill="none" />
<circle cx="775.3" cy="47.8" r="1.3" fill="#000"/>
<polygon points="775.3,66.9 773.4,62.4 777.2,62.4" fill="#222"/>
<path d="M766.6,72 l1.6,-2.7 l2.4,5.4 l2.4,-5.4 l2.4,5.4 l2.4,-5.4 l2.4,5.4 l2.4,-5.4 l2.4,5.4 l1.6,-2.7 H812.7" fill="none" stroke="#3a3a3a" stroke-width="1"/>
<path d="M812.7,59.4 L812.7,116.4" stroke="#3a3a3a" stroke-width="1" fill="none" />
<path d="M810.1,113.4 L812.7,116.6 L815.3,113.4" stroke="#3a3a3a" stroke-width="1" fill="none"/>
<circle cx="812.7" cy="59.4" r="1.3" fill="#000"/>
<circle cx="812.7" cy="72.0" r="1.3" fill="#000"/>
<circle cx="812.7" cy="97.0" r="1.3" fill="#000"/>
<path d="M766.6,84.9 L728.8,84.9" stroke="#3a3a3a" stroke-width="1" fill="none" />
<path d="M732.0,82.3 L728.8,84.9 L732.0,87.5" stroke="#3a3a3a" stroke-width="1" fill="none"/>
<circle cx="766.6" cy="84.9" r="1.3" fill="#000"/>
<path d="M766.6,109.7 L787.9,97.0 L812.7,97.0" stroke="#3a3a3a" stroke-width="1.1" fill="none" />
<circle cx="787.9" cy="97.0" r="1.3" fill="#000"/>
<circle cx="766.6" cy="109.7" r="1.4" fill="#000"/>
<polygon points="767.2,109.3 769.7,105.7 771.6,108.8" fill="#222"/>
<path d="M808.5,119.7 Q809.8,122.0 812.7,122.0 Q815.6,122.0 816.9,119.7" stroke="#3a3a3a" stroke-width="1.2" fill="none"/>
<path d="M342.4,477.8 Q340.4,479.1 340.4,482.0 Q340.4,484.9 342.4,486.2" stroke="#3a3a3a" stroke-width="1.2" fill="none"/>
<path d="M375.2,477.8 Q377.2,479.1 377.2,482.0 Q377.2,484.9 375.2,486.2" stroke="#3a3a3a" stroke-width="1.2" fill="none"/>
<path d="M345.8,482.0 L372.8,482.0" stroke="#3a3a3a" stroke-width="1" fill="none" />
<path d="M348.8,479.4 L345.6,482.0 L348.8,484.6" stroke="#3a3a3a" stroke-width="1" fill="none"/>
<path d="M369.8,479.4 L373.0,482.0 L369.8,484.6" stroke="#3a3a3a" stroke-width="1" fill="none"/>
<g fill="#424242" font-family="'Liberation Sans', Arial, sans-serif">
<text x="101.0" y="37.0" text-anchor="start" font-size="7.4" >LT BLU</text>
<text x="118.6" y="47.8" text-anchor="start" font-size="7.4" >3</text>
<text x="223.0" y="37.0" text-anchor="start" font-size="7.4" >DK BLU</text>
<text x="237.2" y="47.8" text-anchor="start" font-size="7.4" >32</text>
<text x="143.0" y="70.9" text-anchor="start" font-size="7.4" >LEFT</text>
<text x="143.0" y="80.0" text-anchor="start" font-size="7.4" >TURN</text>
<text x="143.0" y="89.0" text-anchor="start" font-size="7.4" >IND.</text>
<text x="267.4" y="70.9" text-anchor="start" font-size="7.4" >RIGHT</text>
<text x="267.4" y="80.0" text-anchor="start" font-size="7.4" >TURN</text>
<text x="267.4" y="89.0" text-anchor="start" font-size="7.4" >IND.</text>
<text x="301.3" y="58.1" text-anchor="start" font-size="7.4" >INSTRU-</text>
<text x="301.3" y="67.1" text-anchor="start" font-size="7.4" >MENT</text>
<text x="301.3" y="76.7" text-anchor="start" font-size="7.4" >CLUSTER</text>
<text x="116.8" y="113.5" text-anchor="start" font-size="7.4" >31</text>
<text x="110.8" y="123.6" text-anchor="start" font-size="7.4" >BLK</text>
<text x="110.8" y="147.9" text-anchor="start" font-size="7.4" >BLK</text>
<text x="138.2" y="161.9" text-anchor="start" font-size="7.4" >G202</text>
<text x="138.2" y="170.8" text-anchor="start" font-size="7.4" >(BEHIND LEFT</text>
<text x="138.2" y="179.8" text-anchor="start" font-size="7.4" >SIDE OF I/P)</text>
<text x="51.5" y="133.3" text-anchor="start" font-size="7.4" >LT BLU</text>
<text x="237.8" y="153.8" text-anchor="start" font-size="7.4" >BRN</text>
<text x="323.1" y="133.2" text-anchor="start" font-size="7.4" >DK BLU</text>
<text x="390.7" y="17.5" text-anchor="start" font-size="7.4" >YEL</text>
<text x="477.7" y="29.6" text-anchor="start" font-size="7.4" >DK GRN</text>
<text x="390.7" y="79.6" text-anchor="start" font-size="7.4" >BRN</text>
<text x="424.6" y="68.5" text-anchor="start" font-size="7.4" >REAR</text>
<text x="424.6" y="77.6" text-anchor="start" font-size="7.4" >CLEAR-</text>
<text x="424.6" y="86.7" text-anchor="start" font-size="7.4" >ANCE</text>
<text x="424.6" y="96.6" text-anchor="start" font-size="7.4" >LAMPS</text>
<text x="424.6" y="105.7" text-anchor="start" font-size="7.4" >CIRCUIT</text>
<text x="402.8" y="126.6" text-anchor="start" font-size="7.4" >W/</text>
<text x="402.8" y="135.7" text-anchor="start" font-size="7.4" >DUAL REAR</text>
<text x="402.8" y="144.7" text-anchor="start" font-size="7.4" >WHEELS</text>
<text x="526.7" y="54.8" text-anchor="start" font-size="7.4" >BRN</text>
<text x="560.6" y="53.7" text-anchor="start" font-size="7.4" >REAR</text>
<text x="560.6" y="62.8" text-anchor="start" font-size="7.4" >CLEARANCE</text>
<text x="560.6" y="71.8" text-anchor="start" font-size="7.4" >LAMPS CIRCUIT</text>
<text x="526.7" y="76.6" text-anchor="start" font-size="7.4" >W/</text>
<text x="526.7" y="85.6" text-anchor="start" font-size="7.4" >DUAL REAR</text>
<text x="526.7" y="94.7" text-anchor="start" font-size="7.4" >WHEELS</text>
<text x="526.7" y="104.8" text-anchor="start" font-size="7.4" >BRN</text>
<text x="560.6" y="108.5" text-anchor="start" font-size="7.4" >HEADLIGHTS</text>
<text x="560.6" y="117.7" text-anchor="start" font-size="7.4" >SYSTEM</text>
<text x="526.7" y="129.7" text-anchor="start" font-size="7.4" >BRN</text>
<text x="560.6" y="133.2" text-anchor="start" font-size="7.4" >INTERIOR LIGHTS</text>
<text x="560.6" y="142.1" text-anchor="start" font-size="7.4" >SYSTEM</text>
<text x="427.9" y="166.8" text-anchor="start" font-size="7.4" >BRN</text>
<text x="427.9" y="178.7" text-anchor="start" font-size="7.4" >BRN</text>
<text x="427.9" y="191.9" text-anchor="start" font-size="7.4" >BRN</text>
<text x="526.9" y="166.8" text-anchor="start" font-size="7.4" >BRN</text>
<text x="526.9" y="191.9" text-anchor="start" font-size="7.4" >BRN</text>
<text x="624.8" y="6.2" text-anchor="start" font-size="7.4" >LEFT SIDE</text>
<text x="641.0" y="15.0" text-anchor="start" font-size="7.4" >OF I/P)</text>
<text x="802.5" y="12.1" text-anchor="start" font-size="7.4" >ORG</text>
<text x="814.1" y="25.0" text-anchor="start" font-size="7.4" >H</text>
<text x="853.9" y="34.7" text-anchor="start" font-size="7.4" >HEADLAMP</text>
<text x="853.9" y="43.8" text-anchor="start" font-size="7.4" >&amp; PANEL</text>
<text x="853.9" y="52.8" text-anchor="start" font-size="7.4" >DIMMER</text>
<text x="853.9" y="61.9" text-anchor="start" font-size="7.4" >SWITCH</text>
<text x="743.5" y="58.2" text-anchor="start" font-size="7.4" >RHEO-</text>
<text x="742.6" y="67.2" text-anchor="start" font-size="7.4" >STAT</text>
<text x="791.6" y="52.9" text-anchor="start" font-size="7.4" >PARK</text>
<text x="823.1" y="70.8" text-anchor="start" font-size="7.4" >OFF</text>
<text x="732.1" y="95.1" text-anchor="start" font-size="7.4" >PARADE</text>
<text x="736.3" y="104.3" text-anchor="start" font-size="7.4" >MODE</text>
<text x="741.8" y="113.0" text-anchor="start" font-size="7.4" >SW</text>
<text x="801.3" y="124.7" text-anchor="start" font-size="7.4" >S</text>
<text x="792.8" y="137.0" text-anchor="start" font-size="7.4" >BRN</text>
<text x="93.6" y="204.0" text-anchor="start" font-size="7.4" >LT BLU</text>
<text x="130.0" y="204.0" text-anchor="start" font-size="7.4" >A</text>
<text x="169.0" y="204.0" text-anchor="start" font-size="7.4" >B</text>
<text x="177.9" y="204.0" text-anchor="start" font-size="7.4" >BRN</text>
<text x="151.4" y="228.6" text-anchor="middle" font-size="7.4" >LEFT FRONT</text>
<text x="152.3" y="237.6" text-anchor="middle" font-size="7.4" >MARKER LAMP</text>
<text x="237.8" y="204.0" text-anchor="start" font-size="7.4" >BRN</text>
<text x="257.6" y="204.0" text-anchor="start" font-size="7.4" >B</text>
<text x="296.6" y="204.0" text-anchor="start" font-size="7.4" >A</text>
<text x="281.5" y="228.6" text-anchor="middle" font-size="7.4" >RIGHT FRONT</text>
<text x="282.5" y="237.6" text-anchor="middle" font-size="7.4" >MARKER LAMP</text>
<text x="310.0" y="205.6" text-anchor="start" font-size="7.4" >DK BLU</text>
<text x="360.4" y="208.7" text-anchor="start" font-size="7.4" >YEL</text>
<text x="384.0" y="208.7" text-anchor="start" font-size="7.4" >BRN</text>
<text x="51.9" y="285.9" text-anchor="start" font-size="7.4" >LT BLU</text>
<text x="68.1" y="294.2" text-anchor="start" font-size="7.4" >A</text>
<text x="85.4" y="285.9" text-anchor="start" font-size="7.4" >BRN</text>
<text x="94.8" y="294.2" text-anchor="start" font-size="7.4" >B</text>
<text x="138.6" y="285.9" text-anchor="start" font-size="7.4" >LT BLU</text>
<text x="154.4" y="294.2" text-anchor="start" font-size="7.4" >A</text>
<text x="172.5" y="285.9" text-anchor="start" font-size="7.4" >BRN</text>
<text x="181.5" y="294.2" text-anchor="start" font-size="7.4" >B</text>
<text x="120.0" y="297.6" text-anchor="start" font-size="7.4" >LEFT</text>
<text x="120.0" y="306.8" text-anchor="start" font-size="7.4" >FRONT</text>
<text x="120.0" y="315.9" text-anchor="start" font-size="7.4" >PARK/</text>
<text x="120.0" y="325.1" text-anchor="start" font-size="7.4" >TURN</text>
<text x="120.0" y="334.2" text-anchor="start" font-size="7.4" >LAMPS</text>
<text x="79.8" y="329.0" text-anchor="start" font-size="7.4" >G</text>
<text x="73.3" y="337.6" text-anchor="start" font-size="7.4" >BLK</text>
<text x="167.1" y="329.0" text-anchor="start" font-size="7.4" >G</text>
<text x="160.0" y="337.6" text-anchor="start" font-size="7.4" >BLK</text>
<text x="222.0" y="285.9" text-anchor="start" font-size="7.4" >BRN</text>
<text x="231.8" y="294.2" text-anchor="start" font-size="7.4" >B</text>
<text x="252.0" y="276.8" text-anchor="start" font-size="7.4" >DK</text>
<text x="248.0" y="285.9" text-anchor="start" font-size="7.4" >BLU</text>
<text x="254.3" y="294.2" text-anchor="start" font-size="7.4" >A</text>
<text x="308.7" y="285.9" text-anchor="start" font-size="7.4" >BRN</text>
<text x="318.0" y="294.2" text-anchor="start" font-size="7.4" >B</text>
<text x="339.6" y="276.8" text-anchor="start" font-size="7.4" >DK</text>
<text x="335.2" y="285.9" text-anchor="start" font-size="7.4" >BLU</text>
<text x="341.0" y="294.2" text-anchor="start" font-size="7.4" >A</text>
<text x="283.2" y="300.7" text-anchor="start" font-size="7.4" >RIGHT</text>
<text x="283.2" y="309.8" text-anchor="start" font-size="7.4" >FRONT</text>
<text x="283.2" y="318.8" text-anchor="start" font-size="7.4" >PARK/</text>
<text x="283.2" y="327.8" text-anchor="start" font-size="7.4" >TURN</text>
<text x="283.2" y="336.9" text-anchor="start" font-size="7.4" >LAMPS</text>
<text x="242.5" y="329.0" text-anchor="start" font-size="7.4" >G</text>
<text x="234.8" y="337.6" text-anchor="start" font-size="7.4" >BLK</text>
<text x="328.6" y="329.0" text-anchor="start" font-size="7.4" >G</text>
<text x="321.6" y="337.6" text-anchor="start" font-size="7.4" >BLK</text>
<text x="73.3" y="358.5" text-anchor="start" font-size="7.4" >BLK</text>
<text x="100.2" y="372.8" text-anchor="start" font-size="7.4" >G108</text>
<text x="100.2" y="381.7" text-anchor="start" font-size="7.4" >(LEFT RADIATOR</text>
<text x="100.2" y="391.8" text-anchor="start" font-size="7.4" >SUPPORT, NEAR</text>
<text x="100.2" y="400.9" text-anchor="start" font-size="7.4" >LEFT HEADLAMP)</text>
<text x="321.6" y="358.5" text-anchor="start" font-size="7.4" >BLK</text>
<text x="349.0" y="373.9" text-anchor="start" font-size="7.4" >G1O1</text>
<text x="349.0" y="383.0" text-anchor="start" font-size="7.4" >(RIGHT INNER</text>
<text x="349.0" y="392.2" text-anchor="start" font-size="7.4" >FENDER, BELOW</text>
<text x="349.0" y="401.3" text-anchor="start" font-size="7.4" >UNDERHOOD REEL LAMP)</text>
<text x="366.0" y="227.9" text-anchor="start" font-size="7.4" >C</text>
<text x="392.5" y="227.9" text-anchor="start" font-size="7.4" >B</text>
<text x="453.0" y="227.9" text-anchor="start" font-size="7.4" >C</text>
<text x="479.4" y="227.9" text-anchor="start" font-size="7.4" >B</text>
<text x="450.7" y="208.7" text-anchor="start" font-size="7.4" >DK</text>
<text x="445.1" y="217.9" text-anchor="start" font-size="7.4" >GRN</text>
<text x="470.4" y="208.7" text-anchor="start" font-size="7.4" >BRN</text>
<text x="416.0" y="228.8" text-anchor="start" font-size="7.4" >LEFT</text>
<text x="416.0" y="237.9" text-anchor="start" font-size="7.4" >TAIL/</text>
<text x="416.0" y="246.9" text-anchor="start" font-size="7.4" >STOP/</text>
<text x="416.0" y="256.0" text-anchor="start" font-size="7.4" >TURN</text>
<text x="416.0" y="265.1" text-anchor="start" font-size="7.4" >LAMP</text>
<text x="502.9" y="228.8" text-anchor="start" font-size="7.4" >RIGHT</text>
<text x="502.9" y="237.9" text-anchor="start" font-size="7.4" >TAIL/</text>
<text x="502.9" y="246.9" text-anchor="start" font-size="7.4" >STOP/</text>
<text x="502.9" y="256.0" text-anchor="start" font-size="7.4" >TURN</text>
<text x="502.9" y="265.1" text-anchor="start" font-size="7.4" >LAMP</text>
<text x="377.9" y="262.0" text-anchor="start" font-size="7.4" >A</text>
<text x="464.8" y="262.0" text-anchor="start" font-size="7.4" >A</text>
<text x="371.2" y="274.5" text-anchor="start" font-size="7.4" >BLK</text>
<text x="457.8" y="271.8" text-anchor="start" font-size="7.4" >BLK</text>
<text x="371.2" y="300.0" text-anchor="start" font-size="7.4" >BLK</text>
<text x="399.0" y="311.9" text-anchor="start" font-size="7.4" >G415</text>
<text x="399.0" y="320.9" text-anchor="start" font-size="7.4" >(LEFT FRAME</text>
<text x="399.0" y="330.0" text-anchor="start" font-size="7.4" >RAIL, BEHIND</text>
<text x="399.0" y="339.0" text-anchor="start" font-size="7.4" >BUMPER)</text>
<text x="525.2" y="285.4" text-anchor="end" font-size="7.4" >W/</text>
<text x="524.8" y="294.3" text-anchor="end" font-size="7.4" >DUAL REAR</text>
<text x="526.4" y="303.3" text-anchor="end" font-size="7.4" >WHEELS</text>
<text x="520.0" y="314.4" text-anchor="start" font-size="7.4" >BRN</text>
<text x="539.0" y="337.6" text-anchor="middle" font-size="7.4" >REAR</text>
<text x="539.0" y="346.7" text-anchor="middle" font-size="7.4" >CLEARANCE</text>
<text x="540.0" y="355.7" text-anchor="middle" font-size="7.4" >LAMPS CIRCUIT</text>
<text x="767.8" y="192.6" text-anchor="start" font-size="7.4" >BRN</text>
<text x="759.4" y="211.5" text-anchor="middle" font-size="7.4" >W/O STEP</text>
<text x="760.5" y="220.5" text-anchor="middle" font-size="7.4" >BUMPER</text>
<text x="812.0" y="211.5" text-anchor="middle" font-size="7.4" >W/ STEP</text>
<text x="812.5" y="220.5" text-anchor="middle" font-size="7.4" >BUMPER</text>
<text x="730.2" y="254.7" text-anchor="start" font-size="7.4" >BRN</text>
<text x="739.9" y="264.7" text-anchor="start" font-size="7.4" >A</text>
<text x="764.9" y="279.0" text-anchor="start" font-size="7.4" >LICENSE</text>
<text x="766.8" y="288.0" text-anchor="start" font-size="7.4" >LAMP</text>
<text x="740.6" y="300.6" text-anchor="start" font-size="7.4" >B</text>
<text x="732.0" y="310.2" text-anchor="start" font-size="7.4" >BLK</text>
<text x="804.9" y="239.0" text-anchor="start" font-size="7.4" >BRN</text>
<text x="804.9" y="254.7" text-anchor="start" font-size="7.4" >BRN</text>
<text x="814.6" y="264.7" text-anchor="start" font-size="7.4" >B</text>
<text x="866.8" y="254.7" text-anchor="start" font-size="7.4" >BRN</text>
<text x="876.5" y="264.7" text-anchor="start" font-size="7.4" >A</text>
<text x="838.9" y="279.0" text-anchor="start" font-size="7.4" >LICENSE</text>
<text x="840.6" y="288.0" text-anchor="start" font-size="7.4" >LAMPS</text>
<text x="814.6" y="300.6" text-anchor="start" font-size="7.4" >A</text>
<text x="828.0" y="302.5" text-anchor="start" font-size="7.4" >LH</text>
<text x="806.2" y="310.2" text-anchor="start" font-size="7.4" >BLK</text>
<text x="876.5" y="300.6" text-anchor="start" font-size="7.4" >B</text>
<text x="889.8" y="302.5" text-anchor="start" font-size="7.4" >RH</text>
<text x="868.7" y="310.2" text-anchor="start" font-size="7.4" >BLK</text>
<text x="806.2" y="331.6" text-anchor="start" font-size="7.4" >BLK</text>
<text x="687.1" y="336.8" text-anchor="middle" font-size="7.4" >HOT AT</text>
<text x="686.5" y="345.6" text-anchor="middle" font-size="7.4" >ALL TIMES</text>
<text x="693.2" y="371.2" text-anchor="start" font-size="7.4" >B</text>
<text x="669.3" y="401.0" text-anchor="start" font-size="7.4" >RED</text>
<text x="713.1" y="356.4" text-anchor="start" font-size="7.4" >UNDER-</text>
<text x="713.1" y="365.3" text-anchor="start" font-size="7.4" >HOOD</text>
<text x="713.1" y="374.3" text-anchor="start" font-size="7.4" >FUSE-</text>
<text x="713.1" y="383.2" text-anchor="start" font-size="7.4" >RELAY</text>
<text x="713.1" y="392.1" text-anchor="start" font-size="7.4" >CENTER</text>
<text x="713.1" y="401.0" text-anchor="start" font-size="7.4" >(LEFT REAR</text>
<text x="713.1" y="410.0" text-anchor="start" font-size="7.4" >OF ENGINE</text>
<text x="713.1" y="418.9" text-anchor="start" font-size="7.4" >COMPT.)</text>
<text x="768.8" y="357.8" text-anchor="start" font-size="7.4" >BLK</text>
<text x="799.8" y="377.7" text-anchor="start" font-size="7.4" >BLK</text>
<text x="836.7" y="387.2" text-anchor="start" font-size="7.4" >G415</text>
<text x="836.7" y="396.3" text-anchor="start" font-size="7.4" >(LEFT FRAME</text>
<text x="836.7" y="405.0" text-anchor="start" font-size="7.4" >RAIL, BEHIND</text>
<text x="836.7" y="414.0" text-anchor="start" font-size="7.4" >BUMPER)</text>
<text x="804.9" y="440.8" text-anchor="start" font-size="7.4" >RED</text>
<text x="793.8" y="464.6" text-anchor="start" font-size="7.4" >LT GRN</text>
<text x="807.0" y="490.4" text-anchor="start" font-size="7.4" >YEL</text>
<text x="791.6" y="503.3" text-anchor="start" font-size="7.4" >DK GRN</text>
<text x="805.2" y="526.5" text-anchor="start" font-size="7.4" >BRN</text>
<text x="724.9" y="469.5" text-anchor="end" font-size="7.4" >BACKUP</text>
<text x="726.5" y="478.6" text-anchor="end" font-size="7.4" >LIGHTS CIRCUIT</text>
<text x="842.5" y="493.6" text-anchor="start" font-size="7.4" >WIRE LEADS</text>
<text x="842.5" y="502.6" text-anchor="start" font-size="7.4" >ARE TO BE</text>
<text x="842.5" y="511.6" text-anchor="start" font-size="7.4" >SPLICED TO</text>
<text x="842.5" y="520.6" text-anchor="start" font-size="7.4" >TRAILER</text>
<text x="842.5" y="529.6" text-anchor="start" font-size="7.4" >WIRING</text>
<text x="842.5" y="538.6" text-anchor="start" font-size="7.4" >HARNESS</text>
<text x="357.0" y="428.9" text-anchor="middle" font-size="7.4" >CONVENIENCE</text>
<text x="358.0" y="437.9" text-anchor="middle" font-size="7.4" >CENTER</text>
<text x="357.4" y="446.8" text-anchor="middle" font-size="7.4" >(UNDER</text>
<text x="357.0" y="455.8" text-anchor="middle" font-size="7.4" >LEFT SIDE</text>
<text x="358.0" y="464.7" text-anchor="middle" font-size="7.4" >OF I/P)</text>
<text x="332.2" y="477.5" text-anchor="start" font-size="7.4" >B</text>
<text x="381.2" y="477.5" text-anchor="start" font-size="7.4" >C8</text>
<text x="402.8" y="477.5" text-anchor="start" font-size="7.4" >BRN</text>
<text x="318.9" y="491.6" text-anchor="start" font-size="7.4" text-decoration="underline">C219</text>
<text x="103.0" y="477.8" text-anchor="start" font-size="7.4" >WHT</text>
<text x="140.8" y="477.8" text-anchor="start" font-size="7.4" >WHT</text>
<text x="177.4" y="477.8" text-anchor="start" font-size="7.4" >WHT</text>
<text x="219.5" y="477.8" text-anchor="start" font-size="7.4" >WHT</text>
<text x="264.2" y="477.8" text-anchor="start" font-size="7.4" >WHT</text>
<text x="60.0" y="499.7" text-anchor="start" font-size="7.4" >RIGHT</text>
<text x="62.8" y="510.0" text-anchor="start" font-size="7.4" >CLEAR-</text>
<text x="63.2" y="518.9" text-anchor="start" font-size="7.4" >ANCE</text>
<text x="65.6" y="527.8" text-anchor="start" font-size="7.4" >LAMP</text>
<text x="266.8" y="495.8" text-anchor="start" font-size="7.4" >LEFT</text>
<text x="266.8" y="504.9" text-anchor="start" font-size="7.4" >CLEAR-</text>
<text x="266.8" y="514.0" text-anchor="start" font-size="7.4" >ANCE</text>
<text x="266.8" y="523.1" text-anchor="start" font-size="7.4" >LAMP</text>
<text x="108.8" y="528.8" text-anchor="start" font-size="7.4" >BLK</text>
<text x="146.0" y="528.8" text-anchor="start" font-size="7.4" >BLK</text>
<text x="183.3" y="528.8" text-anchor="start" font-size="7.4" >BLK</text>
<text x="221.0" y="531.6" text-anchor="start" font-size="7.4" >BLK</text>
<text x="264.0" y="540.2" text-anchor="start" font-size="7.4" >BLK</text>
<text x="302.0" y="540.2" text-anchor="start" font-size="7.4" >BLK</text>
<text x="331.5" y="540.2" text-anchor="start" font-size="7.4" >A</text>
<text x="381.2" y="540.2" text-anchor="start" font-size="7.4" >C5</text>
<text x="402.8" y="540.2" text-anchor="start" font-size="7.4" >BLK</text>
<text x="438.0" y="540.2" text-anchor="start" font-size="7.4" >BLK</text>
</g>
<rect x="0" y="0" width="908" height="4" fill="#6b88a7"/>
<rect x="0" y="3.75" width="908" height="1.1" fill="#070c16"/>
<rect x="4.9" y="4" width="1.15" height="536" fill="#000"/>
<rect x="904.9" y="4" width="1.15" height="536" fill="#000"/>
</svg>
</body></html>
